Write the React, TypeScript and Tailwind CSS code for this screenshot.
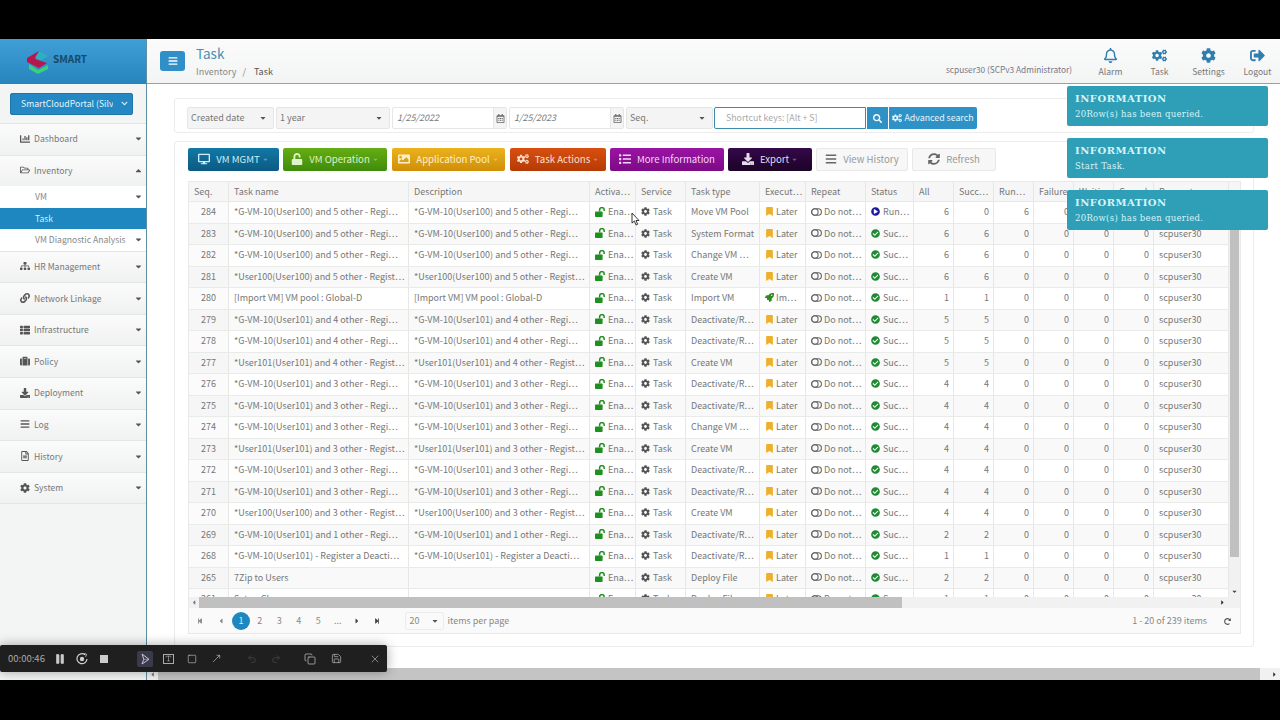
import React from "react";
import {
  FaDesktop, FaUnlock, FaImage, FaCogs, FaList, FaDownload, FaBars, FaSyncAlt, FaSearch, FaRegCalendarAlt,
  FaRegBell, FaSignOutAlt, FaCog, FaChartBar, FaRegFolderOpen, FaSitemap, FaLink, FaThList, FaSuitcase,
  FaRegFileAlt, FaBookmark, FaPlayCircle, FaCheckCircle, FaRocket, FaCaretDown, FaCaretUp, FaCaretLeft, FaCaretRight,
  FaStepBackward, FaStepForward, FaChevronDown, FaRedoAlt,
} from "react-icons/fa";
import { Pause, Square, Undo2, Redo2, Copy, Save, X, Type, MoveUpRight } from "lucide-react";

const font = "font-['Noto_Sans_CJK_KR','Noto_Sans',sans-serif]";

const g100 = "*G-VM-10(User100) and 5 other - Regi⋯";
const g1014 = "*G-VM-10(User101) and 4 other - Regi⋯";
const g1013 = "*G-VM-10(User101) and 3 other - Regi⋯";
const rows: [number, string, string, string, number, number, number][] = [
  [284, g100, g100, "Move VM Pool", 6, 0, 6],
  [283, g100, g100, "System Format", 6, 6, 0],
  [282, g100, g100, "Change VM ⋯", 6, 6, 0],
  [281, "*User100(User100) and 5 other - Regist⋯", "*User100(User100) and 5 other - Regist⋯", "Create VM", 6, 6, 0],
  [280, "[Import VM] VM pool : Global-D", "[Import VM] VM pool : Global-D", "Import VM", 1, 1, 0],
  [279, g1014, g1014, "Deactivate/R⋯", 5, 5, 0],
  [278, g1014, g1014, "Deactivate/R⋯", 5, 5, 0],
  [277, "*User101(User101) and 4 other - Regist⋯", "*User101(User101) and 4 other - Regist⋯", "Create VM", 5, 5, 0],
  [276, g1013, g1013, "Deactivate/R⋯", 4, 4, 0],
  [275, g1013, g1013, "Deactivate/R⋯", 4, 4, 0],
  [274, g1013, g1013, "Change VM ⋯", 4, 4, 0],
  [273, "*User101(User101) and 3 other - Regist⋯", "*User101(User101) and 3 other - Regist⋯", "Create VM", 4, 4, 0],
  [272, g1013, g1013, "Deactivate/R⋯", 4, 4, 0],
  [271, g1013, g1013, "Deactivate/R⋯", 4, 4, 0],
  [270, "*User100(User100) and 3 other - Regist⋯", "*User100(User100) and 3 other - Regist⋯", "Create VM", 4, 4, 0],
  [269, "*G-VM-10(User101) and 1 other - Regi⋯", "*G-VM-10(User101) and 1 other - Regi⋯", "Deactivate/R⋯", 2, 2, 0],
  [268, "*G-VM-10(User101) - Register a Deacti⋯", "*G-VM-10(User101) - Register a Deacti⋯", "Deactivate/R⋯", 1, 1, 0],
  [265, "7Zip to Users", "", "Deploy File", 2, 2, 0],
  [261, "Setup Chrome", "", "Deploy File", 1, 1, 0],
];

const gridCols =
  "grid grid-cols-[40px_180px_181px_46px_50px_74px_46px_60px_48px_40px_40px_40px_40px_40px_40px_75px]";

function Repeat() {
  return (
    <svg width="11" height="8" viewBox="0 0 11 8" className="mr-[2px] shrink-0" fill="none" stroke="#666" strokeWidth="1.1">
      <rect x="0.6" y="0.8" width="9.8" height="6.4" rx="3.2" />
      <circle cx="3.9" cy="4" r="3.2" />
    </svg>
  );
}

function OpenLock() {
  return (
    <svg width="11" height="10" viewBox="0 0 11 10" className="mr-[2px] shrink-0">
      <rect x="0" y="4.4" width="7.6" height="5.6" rx="0.8" fill="#1f8f1f" />
      <path d="M4.6 4.6V2.9a2.3 2.3 0 0 1 4.6 0V4" fill="none" stroke="#1f8f1f" strokeWidth="1.5" />
    </svg>
  );
}

function Cell({ children, right }: { children?: React.ReactNode; right?: boolean }) {
  return (
    <div
      className={`flex items-center overflow-hidden whitespace-nowrap border-r border-[#e6e8e6] pb-[1px] ${
        right ? "justify-end pr-[4px]" : "pl-[5px]"
      }`}
    >
      {children}
    </div>
  );
}

function Row({ r, i }: { r: (typeof rows)[number]; i: number }) {
  const [seq, name, desc, type, all, suc, run] = r;
  const status = seq === 284;
  return (
    <div className={`${gridCols} h-[21.5px] border-b border-[#e9ebe9] ${i % 2 ? "bg-[#f8f9f8]" : "bg-white"}`}>
      <div className={`flex items-center justify-center overflow-hidden border-r border-[#e6e8e6] pb-[1px] ${i % 2 ? "bg-[#f5f6f5]" : "bg-[#fbfbfb]"}`}>{seq}</div>
      <Cell>{name}</Cell>
      <Cell>{desc}</Cell>
      <Cell>
        <OpenLock />
        Ena⋯
      </Cell>
      <Cell>
        <FaCog className="mr-[3px] shrink-0 text-[9px] text-[#555]" />
        Task
      </Cell>
      <Cell>{type}</Cell>
      <Cell>
        {seq === 280 ? (
          <>
            <FaRocket className="mr-[2px] shrink-0 text-[9px] text-[#2e8b1e]" />
            Im⋯
          </>
        ) : (
          <>
            <FaBookmark className="mr-[2px] shrink-0 text-[9px] text-[#eeb02c]" />
            Later
          </>
        )}
      </Cell>
      <Cell>
        <Repeat />
        Do not⋯
      </Cell>
      <Cell>
        {status ? (
          <FaPlayCircle className="mr-[3px] shrink-0 text-[9px] text-[#1c1c9c]" />
        ) : (
          <FaCheckCircle className="mr-[3px] shrink-0 text-[9px] text-[#1e8a32]" />
        )}
        {status ? "Run⋯" : "Suc⋯"}
      </Cell>
      <Cell right>{all}</Cell>
      <Cell right>{suc}</Cell>
      <Cell right>{run}</Cell>
      <Cell right>0</Cell>
      <Cell right>0</Cell>
      <Cell right>0</Cell>
      <Cell>scpuser30</Cell>
    </div>
  );
}

function Nav({ icon, label, up }: { icon: React.ReactNode; label: string; up?: boolean }) {
  return (
    <div className="flex h-[31.6px] items-center border-t border-[#e4e6e6] bg-gradient-to-b from-[#fbfbfb] to-[#f0f1f1] pb-[1px] pl-[20px] pr-[3px] text-[8.6px] text-[#777]">
      <span className="flex w-[14px] shrink-0 justify-start text-[10px] text-[#555]">{icon}</span>
      <span>{label}</span>
      <span className="ml-auto text-[9px] text-[#555]">{up ? <FaCaretUp /> : <FaCaretDown />}</span>
    </div>
  );
}

function SubNav({ label, active, caret }: { label: string; active?: boolean; caret?: boolean }) {
  return (
    <div
      className={`flex h-[21.5px] items-center whitespace-nowrap pl-[35px] pr-[3px] text-[8.6px] ${active ? "bg-[#1f87c0] text-[#d5eefa]" : "bg-white text-[#888]"}`}
    >
      <span>{label}</span>
      {caret && (
        <span className="ml-auto text-[9px] text-[#555]">
          <FaCaretDown />
        </span>
      )}
    </div>
  );
}

function Select({ w, label }: { w: string; label: string }) {
  return (
    <div className={`${w} flex h-[22px] items-center rounded-[2px] border border-[#e6e6e6] bg-[#f4f4f4] px-[3px] text-[#777]`}>
      <span>{label}</span>
      <FaCaretDown className="ml-auto mr-[3px] text-[8px] text-[#555]" />
    </div>
  );
}

function DateBox({ w, value }: { w: string; value: string }) {
  return (
    <div className={`${w} flex h-[22px] items-center rounded-[2px] border border-[#e6e6e6] bg-white pl-[4px] italic text-[#777]`}>
      <span>{value}</span>
      <span className="ml-auto flex h-full w-[13px] items-center justify-center border-l border-[#e6e6e6] bg-[#f4f4f4] text-[9px] not-italic text-[#666]">
        <FaRegCalendarAlt />
      </span>
    </div>
  );
}

function ActionBtn({
  w, cls, icon, label, caret,
}: { w: string; cls: string; icon: React.ReactNode; label: string; caret?: boolean }) {
  return (
    <div className={`${w} ${cls} flex h-[23px] items-center justify-center gap-[6px] rounded-[2px] pb-[1px] text-[9.6px]`}>
      <span className="text-[12px]">{icon}</span>
      <span>{label}</span>
      {caret && <FaCaretDown className="-ml-[4px] text-[7px] opacity-40" />}
    </div>
  );
}

function TopIcon({ icon, label }: { icon: React.ReactNode; label: string }) {
  return (
    <div className="mt-[3px] flex w-[49px] flex-col items-center gap-[1px] text-[8.6px]">
      <span className="flex h-[16px] items-center text-[15px] text-[#2f7fae]">{icon}</span>
      <span className="text-[#777]">{label}</span>
    </div>
  );
}

function Toast({ text }: { text: string }) {
  return (
    <div className="flex h-[40px] w-[201px] flex-col justify-center gap-[6px] rounded-[2px] bg-[#2e9fb6] pl-[8px] font-['DejaVu_Serif',serif] text-[#d8f3f8]">
      <div className="text-[10px] font-bold leading-none tracking-[0.5px]">INFORMATION</div>
      <div className="text-[8.5px] leading-none tracking-[0.3px]">{text}</div>
    </div>
  );
}

const pagerNum = "flex h-[18px] w-[19.5px] items-center justify-center";

export default function App() {
  return (
    <div className={`${font} relative flex h-[720px] w-[1280px] flex-col overflow-hidden bg-black text-[9px] text-[#777]`}>
      <div className="h-[39px] shrink-0 bg-black" />
      <div className="flex h-[641px] shrink-0">
        {/* sidebar */}
        <aside className="flex w-[147px] shrink-0 flex-col border-r border-[#5d8ea5] bg-[#f3f4f4]">
          <div className="flex h-[45px] shrink-0 items-center bg-gradient-to-b from-[#3f9fd6] to-[#2585bc] pl-[27px]">
            <svg width="23" height="24" viewBox="0 0 23 24">
              <path d="M2 14 L11 20 L21 15 L21 19 L11 24 L2 19Z" fill="#3fcf7a" />
              <path d="M0 8 L12 1 L15 5 L8 9 L20 13 L12 18 L0 12Z" fill="#b8174e" />
              <path d="M12 1 L21 6 L14 10 L8 8Z" fill="#2fb0c0" />
            </svg>
            <span className="-mt-[6px] ml-[3px] text-[10px] font-bold text-[#17496b]">SMART</span>
          </div>
          <div className="flex h-[39px] shrink-0 items-center pl-[10px] pr-[13px]">
            <div className="flex h-[22px] w-full items-center rounded-[2px] border border-[#1f77a8] bg-[#2488c4] pl-[10px] pr-[4px] text-[8.7px] text-[#e3f4fc]">
              <span className="w-[92px] overflow-hidden whitespace-nowrap">SmartCloudPortal (Silver)</span>
              <FaChevronDown className="ml-auto text-[7px]" />
            </div>
          </div>
          <Nav icon={<FaChartBar />} label="Dashboard" />
          <Nav icon={<FaRegFolderOpen />} label="Inventory" up />
          <SubNav label="VM" caret />
          <SubNav label="Task" active />
          <SubNav label="VM Diagnostic Analysis" caret />
          <Nav icon={<FaSitemap />} label="HR Management" />
          <Nav icon={<FaLink />} label="Network Linkage" />
          <Nav icon={<FaThList />} label="Infrastructure" />
          <Nav icon={<FaSuitcase />} label="Policy" />
          <Nav icon={<FaDownload />} label="Deployment" />
          <Nav icon={<FaBars />} label="Log" />
          <Nav icon={<FaRegFileAlt />} label="History" />
          <Nav icon={<FaCog />} label="System" />
          <div className="border-t border-[#e4e6e6]" />
        </aside>

        {/* main */}
        <main className="flex min-w-0 flex-1 flex-col bg-white">
          <header className="flex h-[45px] shrink-0 items-center border-b border-[#7fa9bd] bg-gradient-to-b from-[#fbfbfb] to-[#f3f4f4] pl-[13px]">
            <div className="flex h-[20px] w-[25px] items-center justify-center rounded-[3px] bg-[#2f8fc6] text-[10px] text-white">
              <FaBars />
            </div>
            <div className="ml-[11px] flex flex-col">
              <span className="-mt-[2px] text-[13.5px] leading-[20px] text-[#4a8fb0]">Task</span>
              <span className="mt-[2px] flex leading-[13px]">
                <span className="text-[#888]">Inventory</span>
                <span className="ml-[6px] text-[#888]">/</span>
                <span className="ml-[8px] text-[#555]">Task</span>
              </span>
            </div>
            <span className="ml-auto mr-[14px] mt-[17px] text-[8.3px] text-[#778]">scpuser30 (SCPv3 Administrator)</span>
            <div className="-mr-[2px] flex">
              <TopIcon icon={<FaRegBell />} label="Alarm" />
              <TopIcon icon={<FaCogs />} label="Task" />
              <TopIcon icon={<FaCog />} label="Settings" />
              <TopIcon icon={<FaSignOutAlt />} label="Logout" />
            </div>
          </header>

          <div className="flex h-[584px] shrink-0 flex-col px-[27px] pt-[14px]">
            {/* filters */}
            <section className="flex h-[35px] w-[1080px] shrink-0 items-start gap-[2px] rounded-[3px] border border-[#ececec] pl-[12px] pt-[8px]">
              <Select w="w-[87px]" label="Created date" />
              <Select w="w-[114px]" label="1 year" />
              <DateBox w="w-[115px]" value="1/25/2022" />
              <DateBox w="w-[115px]" value="1/25/2023" />
              <Select w="w-[87px]" label="Seq." />
              <div className="-ml-[1px] flex h-[22px] items-center gap-[1px]">
                <div className="flex h-full w-[152px] items-center rounded-l-[2px] border border-[#3d8ba8] bg-white pl-[11px] text-[8.8px] text-[#aaa]">
                  Shortcut keys: [Alt + S]
                </div>
                <div className="flex h-full w-[21px] items-center justify-center bg-[#2f92c6] text-[9px] text-white">
                  <FaSearch />
                </div>
                <div className="flex h-full w-[88px] items-center justify-center gap-[2px] rounded-r-[2px] bg-[#2f92c6] text-[#e6f6fd]">
                  <FaCogs className="text-[10px]" />
                  <span className="text-[8.8px]">Advanced search</span>
                </div>
              </div>
            </section>

            {/* grid card */}
            <section className="mt-[8px] flex h-[506px] w-[1080px] shrink-0 flex-col rounded-[3px] border border-[#ececec] pl-[13px] pt-[6px]">
              <div className="flex h-[23px] shrink-0 gap-[4px]">
                <ActionBtn w="w-[91px]" cls="bg-gradient-to-b from-[#1279a6] to-[#0b5a82] text-[#d3eef8]" icon={<FaDesktop />} label="VM MGMT" caret />
                <ActionBtn w="w-[104px]" cls="bg-gradient-to-b from-[#65ad14] to-[#3f8c0b] text-[#dff3c8]" icon={<FaUnlock />} label="VM Operation" caret />
                <ActionBtn w="w-[113px]" cls="ml-[1px] bg-gradient-to-b from-[#ecb21c] to-[#cf8f08] text-[#fdf0c8]" icon={<FaImage />} label="Application Pool" caret />
                <ActionBtn w="w-[96px]" cls="ml-[1px] bg-gradient-to-b from-[#d84f10] to-[#b63a06] text-[#fbe0d0]" icon={<FaCogs />} label="Task Actions" caret />
                <ActionBtn w="w-[114px]" cls="bg-gradient-to-b from-[#9b14a4] to-[#7c0a87] text-[#f5d8f7]" icon={<FaList />} label="More Information" />
                <ActionBtn w="w-[84px]" cls="bg-gradient-to-b from-[#35094a] to-[#1c0328] text-[#e6dcec]" icon={<FaDownload />} label="Export" caret />
                <ActionBtn w="w-[92px]" cls="border border-[#e8e8e8] bg-[#f7f7f7] text-[#999]" icon={<FaBars className="text-[#666]" />} label="View History" />
                <ActionBtn w="w-[84px]" cls="border border-[#e8e8e8] bg-[#f7f7f7] text-[#999]" icon={<FaSyncAlt className="text-[#666]" />} label="Refresh" />
              </div>

              <div className="mt-[10px] flex h-[453px] w-[1053px] shrink-0 flex-col border border-[#e8eae8]">
                <div className="flex h-[19px] shrink-0">
                  <div className={`${gridCols} flex-1 bg-[#f6f6f6] text-[#777]`}>
                    {["Seq.", "Task name", "Description", "Activa⋯", "Service", "Task type", "Execut⋯", "Repeat", "Status", "All", "Succ⋯", "Run⋯", "Failure", "Waiting", "Cancel", "Requester"].map((h) => (
                      <div key={h} className="flex items-center overflow-hidden whitespace-nowrap border-r border-[#e6e8e6] pl-[5px]">
                        {h}
                      </div>
                    ))}
                  </div>
                </div>
                <div className="flex h-[396px] shrink-0 overflow-hidden border-t border-[#e8eae8]">
                  <div className="flex-1 overflow-hidden">
                    {rows.map((r, i) => (
                      <Row key={r[0]} r={r} i={i} />
                    ))}
                  </div>
                  <div className="flex w-[11px] shrink-0 flex-col bg-[#f1f1f1]">
                    <div className="mx-[1px] h-[355px] bg-[#c0c0c0]" />
                    <div className="mt-auto flex h-[11px] items-center justify-center text-[7px] text-[#444]">
                      <FaCaretDown />
                    </div>
                  </div>
                </div>
                <div className="flex h-[11px] shrink-0 items-center bg-[#f1f1f1] text-[7px] text-[#777]">
                  <FaCaretLeft className="w-[10px]" />
                  <div className="h-full w-[703px] bg-[#c0c0c0]" />
                  <FaCaretRight className="ml-auto mr-[14px] text-[#333]" />
                </div>
                <div className="flex flex-1 items-center bg-[#fafafa] pl-[1px] pr-[9px] pt-[1px] text-[#888]">
                  <span className={`${pagerNum} text-[6px]`}><FaStepBackward /></span>
                  <span className="ml-[1px] flex h-[18px] w-[21px] items-center justify-center text-[8px]"><FaCaretLeft /></span>
                  <span className="ml-[0.5px] flex h-[18px] w-[18px] items-center justify-center rounded-full bg-[#1f87c0] text-[#d8f0fb]">1</span>
                  <span className={pagerNum}>2</span>
                  <span className={pagerNum}>3</span>
                  <span className={pagerNum}>4</span>
                  <span className={pagerNum}>5</span>
                  <span className={pagerNum}>...</span>
                  <span className={`${pagerNum} text-[8px] text-[#444]`}><FaCaretRight /></span>
                  <span className={`${pagerNum} text-[6px] text-[#444]`}><FaStepForward /></span>
                  <div className="ml-[18px] flex h-[18px] w-[39px] items-center rounded-[2px] border border-[#ececec] pl-[4px]">
                    20
                    <FaCaretDown className="ml-auto mr-[4px] text-[8px] text-[#555]" />
                  </div>
                  <span className="ml-[4px]">items per page</span>
                  <span className="ml-auto mr-[17px]">1 - 20 of 239 items</span>
                  <FaRedoAlt className="text-[7px] text-[#555]" />
                </div>
              </div>
            </section>
          </div>

          {/* page scrollbar */}
          <div className="mt-auto flex h-[12px] shrink-0 items-center bg-[#f1f1f1] text-[7px] text-[#777]">
            <FaCaretLeft className="w-[11px]" />
            <div className="h-full w-[1102px] bg-[#c4c4c4]" />
            <FaCaretRight className="ml-auto mr-[2px] text-[#333]" />
          </div>
        </main>
      </div>
      <div className="flex-1 bg-black" />

      {/* toasts */}
      <div className="absolute left-[1067px] top-[86px] flex flex-col gap-[12px]">
        <Toast text="20Row(s) has been queried." />
        <Toast text="Start Task." />
        <Toast text="20Row(s) has been queried." />
      </div>

      {/* mouse cursor */}
      <svg className="absolute left-[631px] top-[212px]" width="9" height="14" viewBox="0 0 9 14">
        <path d="M1 1 L1 11 L3.4 9 L5 13 L6.6 12.3 L5 8.5 L8 8.5Z" fill="#fff" stroke="#222" strokeWidth="0.9" />
      </svg>

      {/* screen recorder */}
      <div className="absolute left-0 top-[645px] flex h-[27px] w-[387px] items-center rounded-[2px] bg-[#1f1f1f] text-[#bbb] shadow-[0_0_12px_rgba(0,0,0,0.35)]">
        <span className="ml-[8px] w-[46px] text-[9.5px] text-[#aaa]">00:00:46</span>
        <Pause size={12} className="-ml-[1px] w-[14px]" fill="#ccc" strokeWidth={1.5} />
        <svg width="12" height="12" viewBox="0 0 12 12" className="ml-[9px]" fill="none" stroke="#ccc" strokeWidth="1.2">
          <path d="M9 1.7A5 5 0 1 0 11 6" />
          <circle cx="6" cy="6" r="2.2" fill="#ccc" stroke="none" />
          <path d="M7.6 0.6 L10.6 1.2 L9.6 3.8" strokeWidth="0.9" />
        </svg>
        <span className="ml-[12px] h-[8px] w-[8px] bg-[#ccc]" />
        <span className="ml-[29px] flex h-[16px] w-[16px] items-center justify-center rounded-[2px] bg-[#3a3a4a]">
          <svg width="9" height="12" viewBox="0 0 9 12" fill="none" stroke="#c4c4dc" strokeWidth="1">
            <path d="M1 1 L8 6.3 L1 11 L2.8 6.3Z" />
            <path d="M2.8 6.3 L8 6.3" strokeWidth="0.6" />
          </svg>
        </span>
        <span className="ml-[10px] flex h-[10px] w-[11px] items-center justify-center border border-[#aaa]">
          <Type size={7} />
        </span>
        <Square size={10} className="ml-[13px]" strokeWidth={1.6} />
        <MoveUpRight size={11} className="ml-[14px]" strokeWidth={1.5} />
        <Undo2 size={10} className="ml-[25px] text-[#444]" />
        <Redo2 size={10} className="ml-[14px] text-[#444]" />
        <Copy size={12} className="ml-[23px]" strokeWidth={1.5} />
        <Save size={11} className="ml-[15px]" strokeWidth={1.5} />
        <X size={12} className="ml-[27px]" strokeWidth={1.3} />
      </div>
    </div>
  );
}
